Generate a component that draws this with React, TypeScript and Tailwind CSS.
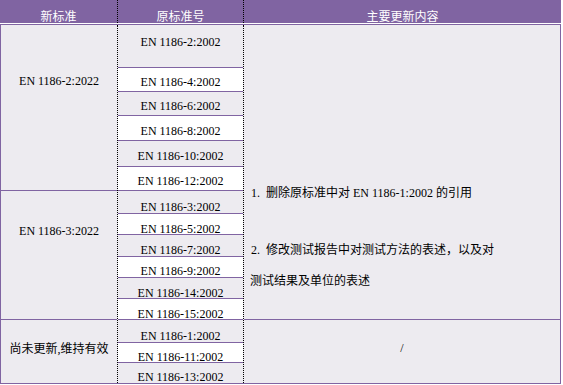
const PURPLE = "border-[#8064A2]";

type Row = { code: string; h: number; pt: number; white: boolean; last?: boolean };

const ROWS: Row[] = [
  { code: "EN 1186-2:2002", h: 43, pt: 11, white: false },
  { code: "EN 1186-4:2002", h: 24, pt: 8, white: true },
  { code: "EN 1186-6:2002", h: 24, pt: 8, white: false },
  { code: "EN 1186-8:2002", h: 25, pt: 9, white: true },
  { code: "EN 1186-10:2002", h: 26, pt: 9, white: false },
  { code: "EN 1186-12:2002", h: 24, pt: 8, white: true },
  { code: "EN 1186-3:2002", h: 23, pt: 10, white: false },
  { code: "EN 1186-5:2002", h: 21, pt: 9, white: true },
  { code: "EN 1186-7:2002", h: 22, pt: 9, white: false },
  { code: "EN 1186-9:2002", h: 21, pt: 8, white: true },
  { code: "EN 1186-14:2002", h: 21, pt: 9, white: false },
  { code: "EN 1186-15:2002", h: 21, pt: 9, white: true },
  { code: "EN 1186-1:2002", h: 23, pt: 10, white: false },
  { code: "EN 1186-11:2002", h: 20, pt: 8, white: true },
  { code: "EN 1186-13:2002", h: 20, pt: 8, white: false, last: true },
];

function CodeRow({ row }: { row: Row }) {
  return (
    <div
      className={`overflow-hidden text-center ${row.white ? "bg-white" : ""} ${row.last ? "" : `border-b ${PURPLE}`}`}
      style={{ height: row.h, paddingTop: row.pt }}
    >
      {row.code}
    </div>
  );
}

export default function App() {
  return (
    <div
      className="h-[385px] w-[563px] overflow-hidden bg-white text-[12px] leading-[12px] text-black"
      style={{ fontFamily: '"Liberation Serif", "Noto Sans CJK SC", serif' }}
    >
      <div className="w-[561px]">
        {/* header */}
        <div className="flex h-[23px] overflow-hidden bg-[#8064A2] text-white">
          <div className="w-[117px] pt-[11px] text-center">新标准</div>
          <div className="w-[126px] border-l border-dotted border-black pt-[11px] text-center">原标准号</div>
          <div className="flex-1 border-l border-dotted border-black pt-[11px] text-center">主要更新内容</div>
        </div>
        <div className="ml-px h-px bg-white" />
        <div className="h-px bg-[#8064A2]" />

        {/* body */}
        <div className={`flex border-x border-b ${PURPLE} bg-[#EDEBF0]`}>
          <div className="flex w-[116px] flex-col">
            <div className={`h-[166px] border-b ${PURPLE} pt-[50px] text-center`}>EN 1186-2:2022</div>
            <div className={`h-[129px] border-b ${PURPLE} pt-[34px] text-center`}>EN 1186-3:2022</div>
            <div className="h-[63px] pt-[23px] text-center">尚未更新,维持有效</div>
          </div>

          <div className="flex w-[126px] flex-col border-l border-dotted border-black">
            {ROWS.map((r) => (
              <CodeRow key={r.code} row={r} />
            ))}
          </div>

          <div className="flex w-[317px] flex-col border-l border-dotted border-black">
            <div className={`h-[295px] border-b ${PURPLE} pl-[7px] pt-[162px]`}>
              <div>
                1.<span className="ml-[6px]">删除原标准中对 EN 1186-1:2002 的引用</span>
              </div>
              <div className="mt-[45px]">
                2.<span className="ml-[6px]">修改测试报告中对测试方法的表述，以及对</span>
              </div>
              <div className="mt-[19px] -ml-px">测试结果及单位的表述</div>
            </div>
            <div className="h-[63px] pt-[22px] text-center">/</div>
          </div>
        </div>
      </div>
    </div>
  );
}
